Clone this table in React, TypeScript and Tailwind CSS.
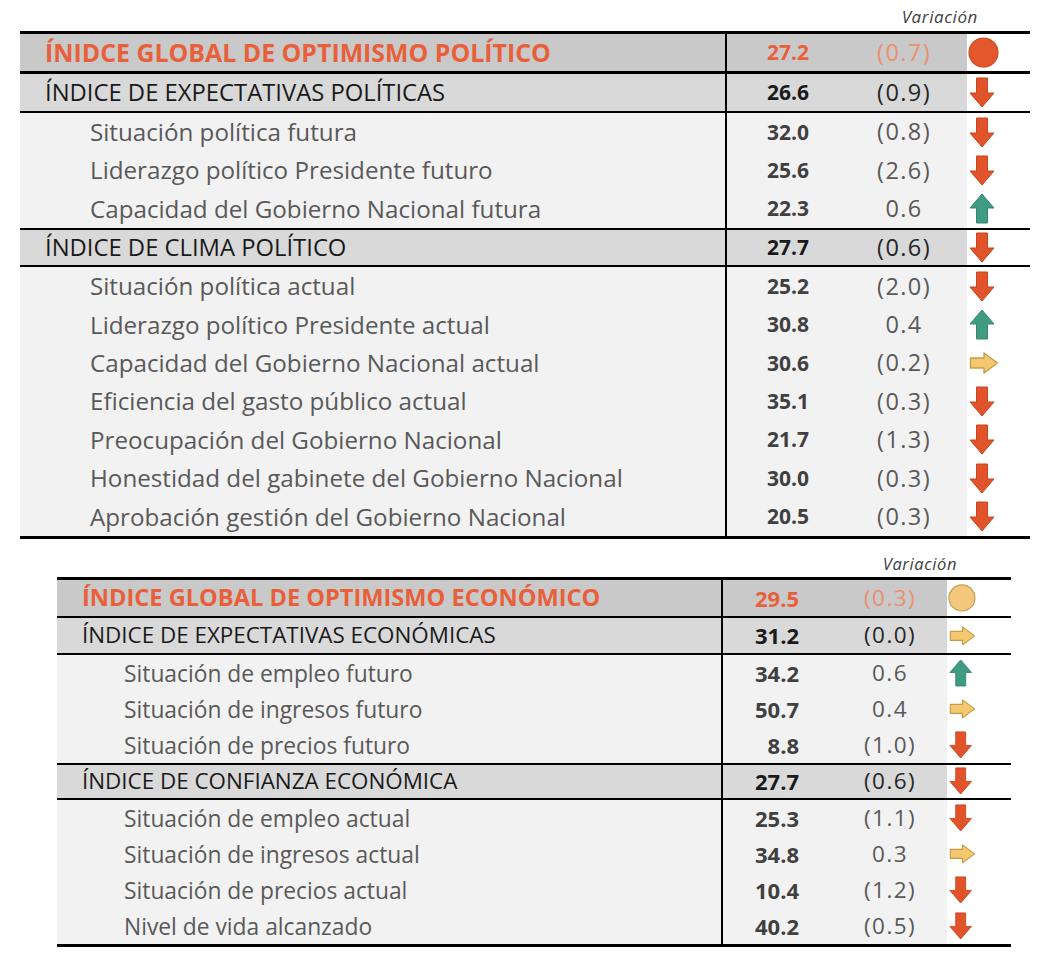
import React from 'react';

type Trend = 'down' | 'up' | 'flat' | 'redDot' | 'yellowDot';

interface Item { label: string; value: string; change: string; trend: Trend }
interface Section { title: string; value: string; change: string; trend: Trend; items: Item[] }
interface Block { title: string; value: string; change: string; trend: Trend; sections: Section[] }

const politico: Block = {
  title: 'ÍNIDCE GLOBAL DE OPTIMISMO POLÍTICO',
  value: '27.2',
  change: '(0.7)',
  trend: 'redDot',
  sections: [
    {
      title: 'ÍNDICE DE EXPECTATIVAS POLÍTICAS', value: '26.6', change: '(0.9)', trend: 'down',
      items: [
        { label: 'Situación política futura', value: '32.0', change: '(0.8)', trend: 'down' },
        { label: 'Liderazgo político Presidente futuro', value: '25.6', change: '(2.6)', trend: 'down' },
        { label: 'Capacidad del Gobierno Nacional futura', value: '22.3', change: '0.6', trend: 'up' },
      ],
    },
    {
      title: 'ÍNDICE DE CLIMA POLÍTICO', value: '27.7', change: '(0.6)', trend: 'down',
      items: [
        { label: 'Situación política actual', value: '25.2', change: '(2.0)', trend: 'down' },
        { label: 'Liderazgo político Presidente actual', value: '30.8', change: '0.4', trend: 'up' },
        { label: 'Capacidad del Gobierno Nacional actual', value: '30.6', change: '(0.2)', trend: 'flat' },
        { label: 'Eficiencia del gasto público actual', value: '35.1', change: '(0.3)', trend: 'down' },
        { label: 'Preocupación del Gobierno Nacional', value: '21.7', change: '(1.3)', trend: 'down' },
        { label: 'Honestidad del gabinete del Gobierno Nacional', value: '30.0', change: '(0.3)', trend: 'down' },
        { label: 'Aprobación gestión del Gobierno Nacional', value: '20.5', change: '(0.3)', trend: 'down' },
      ],
    },
  ],
};

const economico: Block = {
  title: 'ÍNDICE GLOBAL DE OPTIMISMO ECONÓMICO',
  value: '29.5',
  change: '(0.3)',
  trend: 'yellowDot',
  sections: [
    {
      title: 'ÍNDICE DE EXPECTATIVAS ECONÓMICAS', value: '31.2', change: '(0.0)', trend: 'flat',
      items: [
        { label: 'Situación de empleo futuro', value: '34.2', change: '0.6', trend: 'up' },
        { label: 'Situación de ingresos futuro', value: '50.7', change: '0.4', trend: 'flat' },
        { label: 'Situación de precios futuro', value: '8.8', change: '(1.0)', trend: 'down' },
      ],
    },
    {
      title: 'ÍNDICE DE CONFIANZA ECONÓMICA', value: '27.7', change: '(0.6)', trend: 'down',
      items: [
        { label: 'Situación de empleo actual', value: '25.3', change: '(1.1)', trend: 'down' },
        { label: 'Situación de ingresos actual', value: '34.8', change: '0.3', trend: 'flat' },
        { label: 'Situación de precios actual', value: '10.4', change: '(1.2)', trend: 'down' },
        { label: 'Nivel de vida alcanzado', value: '40.2', change: '(0.5)', trend: 'down' },
      ],
    },
  ],
};

// positive changes keep a hidden ")" so digits line up like the Excel format
const Change = ({ v }: { v: string }) =>
  v.startsWith('(') ? <span>{v}</span> : <span>{v}<span className="invisible">)</span></span>;

const TrendIcon = ({ trend, small }: { trend: Trend; small?: boolean }) => {
  const s = small ? 0.9 : 1;
  if (trend === 'redDot' || trend === 'yellowDot') {
    const d = 31 * s;
    const red = trend === 'redDot';
    return (
      <svg width={d} height={d} viewBox="0 0 30 30">
        <circle cx="15" cy="15" r="14" fill={red ? '#e2572b' : '#f3c77c'} stroke={red ? '#d14f25' : '#c49b52'} strokeWidth="1.2" />
      </svg>
    );
  }
  if (trend === 'flat') {
    return (
      <svg width={30 * s} height={22 * s} viewBox="0 0 30 22">
        <path d="M1.5 6 H15 V1 L28.5 11 L15 21 V16 H1.5 Z" fill="#f4c86f" stroke="#c89a48" strokeWidth="1.3" strokeLinejoin="round" />
      </svg>
    );
  }
  const up = trend === 'up';
  return (
    <svg width={26 * s} height={31 * s} viewBox="0 0 26 31">
      {up ? (
        <path d="M7.5 30 H18.5 V15 H25 L13 1 L1 15 H7.5 Z" fill="#3f9b82" stroke="#35866f" strokeWidth="1" strokeLinejoin="round" />
      ) : (
        <path d="M7.5 1 H18.5 V16 H25 L13 30 L1 16 H7.5 Z" fill="#e0532b" stroke="#c9461f" strokeWidth="1" strokeLinejoin="round" />
      )}
    </svg>
  );
};

const PoliticoTable = ({ block }: { block: Block }) => (
  <div className="ml-[20px] w-[1010px]">
    <div className="h-[31px] flex items-center justify-end pr-[52px] pt-[2px] italic text-[17px] tracking-[0.6px] text-[#404040]">Variación</div>
    <div className="border-t-[3px] border-black">
      <div className="flex h-[40px] border-b-[3px] border-black">
        <div className="flex w-[947px] bg-[#c9c9c9]">
          <div className="w-[707px] border-r-2 border-black pl-[25px] flex items-center font-bold text-[24.9px] text-[#e8603a]">{block.title}</div>
          <div className="w-[82px] flex items-center justify-end font-bold text-[21px] text-[#e8603a]">{block.value}</div>
          <div className="w-[122px] flex items-center justify-end text-[23.5px] tracking-[1.4px] text-[#ea9070]"><Change v={block.change} /></div>
        </div>
        <div className="flex-1 flex items-center pl-[1px]"><TrendIcon trend={block.trend} /></div>
      </div>
      {block.sections.map((sec, si) => (
        <div key={si} className={si === block.sections.length - 1 ? 'border-b-[3px] border-black' : ''}>
          <div className={`flex border-b-2 border-black ${si > 0 ? 'h-[39px] border-t-2' : 'h-[39px]'}`}>
            <div className="flex w-[947px] bg-[#d9d9d9]">
              <div className="w-[707px] border-r-2 border-black pl-[25px] flex items-center text-[23.8px] text-[#1a1a1a]">{sec.title}</div>
              <div className="w-[82px] flex items-center justify-end font-bold text-[21px] text-[#1a1a1a]">{sec.value}</div>
              <div className="w-[122px] flex items-center justify-end text-[23.5px] tracking-[1.4px] text-[#262626]"><Change v={sec.change} /></div>
            </div>
            <div className="flex-1 flex items-center pl-[2px]"><TrendIcon trend={sec.trend} /></div>
          </div>
          {sec.items.map((it, ii) => (
            <div key={ii} className="flex h-[38.4px]">
              <div className="flex w-[947px] bg-[#f2f2f2]">
                <div className="w-[707px] border-r-2 border-black pl-[70px] flex items-center text-[24.2px] text-[#595959]">{it.label}</div>
                <div className="w-[82px] flex items-center justify-end font-bold text-[21px] text-[#404040]">{it.value}</div>
                <div className="w-[122px] flex items-center justify-end text-[23.5px] tracking-[1.4px] text-[#595959]"><Change v={it.change} /></div>
              </div>
              <div className="flex-1 flex items-center pl-[2px]"><TrendIcon trend={it.trend} /></div>
            </div>
          ))}
        </div>
      ))}
    </div>
  </div>
);

const EconomicoTable = ({ block }: { block: Block }) => (
  <div className="ml-[57px] w-[954px] mt-[12px]">
    <div className="h-[26px] flex items-center justify-end pr-[54px] italic text-[16.5px] tracking-[0.6px] text-[#404040]">Variación</div>
    <div className="border-t-[3px] border-black">
      <div className="flex h-[38px] border-b-2 border-black">
        <div className="flex w-[890px] bg-[#c9c9c9]">
          <div className="w-[666px] border-r-2 border-black pl-[25px] flex items-center font-bold text-[23.6px] text-[#e8603a]">{block.title}</div>
          <div className="w-[76px] flex items-center justify-end font-bold text-[22px] text-[#e8603a]">{block.value}</div>
          <div className="w-[117px] flex items-center justify-end text-[22.5px] tracking-[1.4px] text-[#ea9070]"><Change v={block.change} /></div>
        </div>
        <div className="flex-1 flex items-center pl-[1px]"><TrendIcon trend={block.trend} small /></div>
      </div>
      {block.sections.map((sec, si) => (
        <div key={si} className={si === block.sections.length - 1 ? 'border-b-[3px] border-black' : ''}>
          <div className={`flex border-b-2 border-black ${si > 0 ? 'h-[37px] border-t-2' : 'h-[37px]'}`}>
            <div className="flex w-[890px] bg-[#d9d9d9]">
              <div className="w-[666px] border-r-2 border-black pl-[25px] flex items-center text-[22.4px] text-[#1a1a1a]">{sec.title}</div>
              <div className="w-[76px] flex items-center justify-end font-bold text-[22px] text-[#1a1a1a]">{sec.value}</div>
              <div className="w-[117px] flex items-center justify-end text-[22.5px] tracking-[1.4px] text-[#262626]"><Change v={sec.change} /></div>
            </div>
            <div className="flex-1 flex items-center pl-[2px]"><TrendIcon trend={sec.trend} small /></div>
          </div>
          {sec.items.map((it, ii) => (
            <div key={ii} className="flex h-[36px]">
              <div className="flex w-[890px] bg-[#f2f2f2]">
                <div className="w-[666px] border-r-2 border-black pl-[67px] pt-[2px] flex items-center text-[22.8px] text-[#595959]">{it.label}</div>
                <div className="w-[76px] flex items-center justify-end font-bold text-[22px] text-[#404040]">{it.value}</div>
                <div className="w-[117px] flex items-center justify-end text-[22.5px] tracking-[1.4px] text-[#595959]"><Change v={it.change} /></div>
              </div>
              <div className="flex-1 flex items-center pl-[2px]"><TrendIcon trend={it.trend} small /></div>
            </div>
          ))}
        </div>
      ))}
    </div>
  </div>
);

export default function App() {
  return (
    <div className="w-[1046px] h-[975px] bg-white font-['Open_Sans',sans-serif] leading-none">
      <PoliticoTable block={politico} />
      <EconomicoTable block={economico} />
    </div>
  );
}
